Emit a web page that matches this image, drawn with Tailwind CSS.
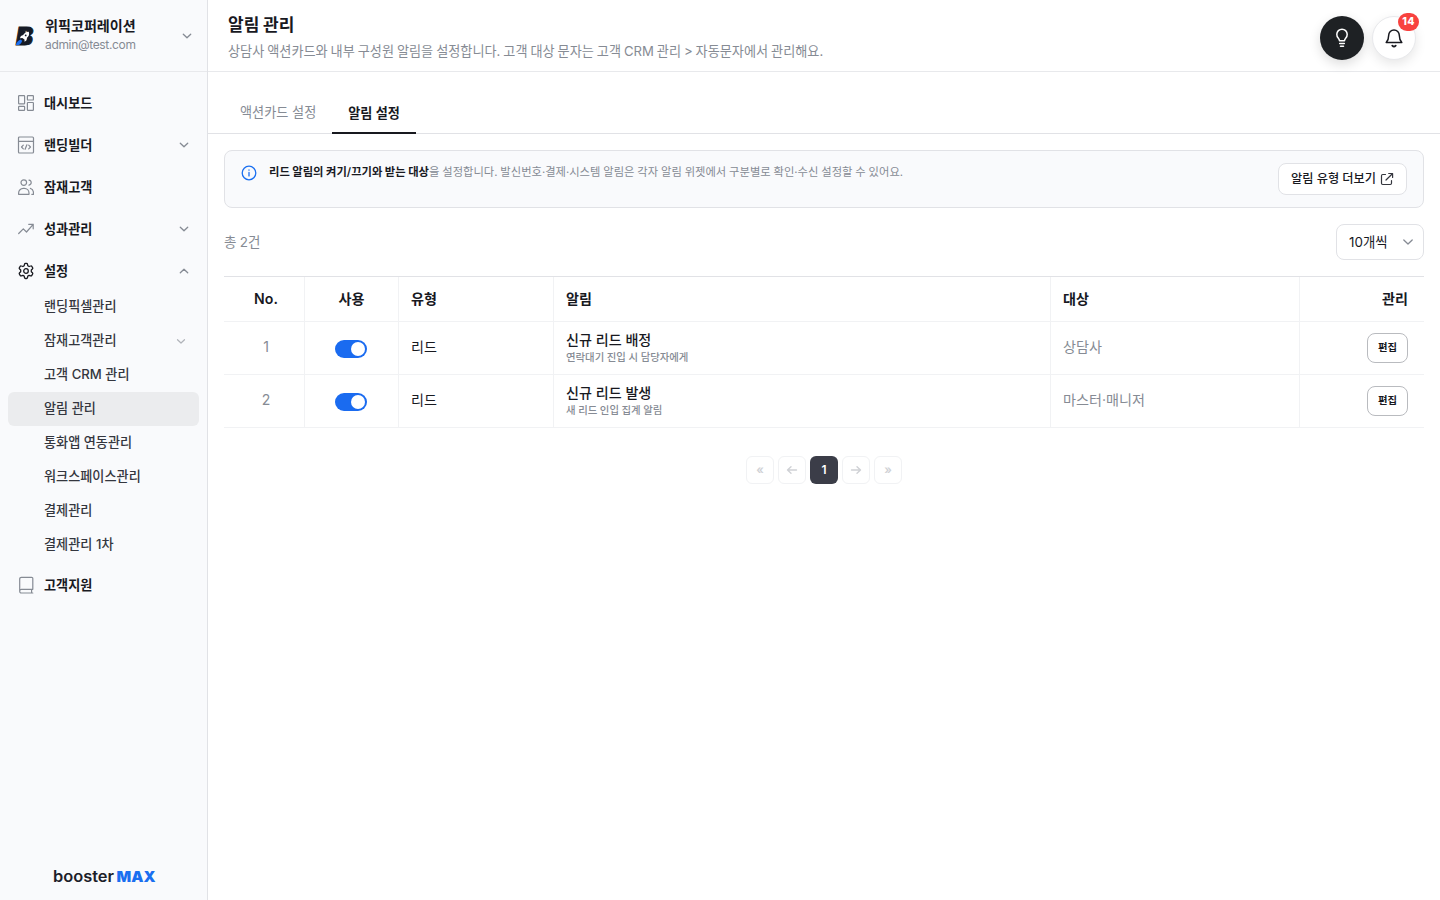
<!DOCTYPE html>
<html lang="ko">
<head>
  <meta charset="UTF-8">
  <title>알림 관리 - boosterMAX</title>
  <script src="https://cdn.jsdelivr.net/npm/@tailwindcss/browser@4"></script>
</head>
<body class="flex h-screen overflow-hidden bg-white text-[#18191f] text-[13.15px] leading-5 [word-spacing:-0.5px] font-[Inter,'Noto_Sans_CJK_KR',sans-serif]">

<aside class="flex flex-col w-52 h-full bg-[#f9fafc] border-r border-[#e1e2e6]">
  <div class="flex items-center h-18 pl-[15px] pr-3.5 border-b border-[#e8e9ec]">
    <svg class="w-5 h-5 shrink-0 overflow-visible" viewBox="0 0 20 20">
      <text x="1" y="18.500" font-family="Inter" font-size="24" font-weight="900" font-style="italic" fill="#161b26" stroke="#161b26" stroke-width="1" textLength="17" lengthAdjust="spacingAndGlyphs">B</text>
      <path d="M4 18.800 6.500 5h4L12 18.800z" fill="#161b26"/>
      <path d="M13.800 5.800c-2.600.1-4.600 1.300-5.600 3.300L5.900 10l-1 2.200 2.400-.3 2.200 1.500.1 2.300 1.900-1.400.5-2.500c1.900-1.300 2.600-3.500 1.800-6z" fill="#fff"/>
      <circle cx="10.700" cy="9.400" r=".9" fill="#161b26"/>
      <path d="M.8 18.900c.6-2.400 2.200-4.300 4.700-5.400l1.700 1.300c-.6 2.300-2 3.800-3.700 4.100z" fill="#1a6ff0"/>
    </svg>
    <div class="ml-2.5 flex-1 pb-0.5">
      <div class="text-[14.1px] leading-5 font-semibold">위픽코퍼레이션</div>
      <div class="text-[12px] leading-[18px] tracking-[-0.33px] text-[#868b94]">admin@test.com</div>
    </div>
    <svg class="w-3 h-3" viewBox="0 0 12 12" fill="none" stroke="#868b94" stroke-width="1.3" stroke-linecap="round" stroke-linejoin="round"><path d="M2.300 4.200 6 7.800l3.700-3.600"/></svg>
  </div>

  <nav class="flex flex-col gap-1.5 pt-[13px] px-2 font-semibold">
    <a class="flex items-center h-9 px-2.5 gap-2.5">
      <svg class="w-4 h-4" viewBox="0 0 16 16" fill="none" stroke="#868b94" stroke-width="1.200"><rect x=".6" y=".6" width="6" height="8.200" rx=".6"/><rect x="9.400" y=".6" width="6" height="4.400" rx=".6"/><rect x=".6" y="11.400" width="6" height="4" rx=".6"/><rect x="9.400" y="7.500" width="6" height="7.900" rx=".6"/></svg>
      <span>대시보드</span>
    </a>
    <a class="flex items-center h-9 px-2.5 gap-2.5">
      <svg class="w-4 h-4 overflow-visible" viewBox="0 0 16 16" fill="none" stroke="#868b94" stroke-width="1.200" stroke-linecap="round" stroke-linejoin="round"><rect x=".5" y="0" width="15" height="16" rx="1"/><path d="M.5 4.300h15M5.300 8.200 3.500 10l1.800 1.800M10.700 8.200l1.800 1.800-1.800 1.800M8.900 7.800l-1.800 4.500"/></svg>
      <span class="flex-1">랜딩빌더</span>
      <svg class="w-3 h-3 -mr-px" viewBox="0 0 12 12" fill="none" stroke="#868b94" stroke-width="1.3" stroke-linecap="round" stroke-linejoin="round"><path d="M2.300 4.200 6 7.800l3.700-3.600"/></svg>
    </a>
    <a class="flex items-center h-9 px-2.5 gap-2.5">
      <svg class="w-4 h-4" viewBox="0 0 16 16" fill="none" stroke="#868b94" stroke-width="1.200" stroke-linecap="round" stroke-linejoin="round"><circle cx="5.800" cy="3.600" r="2.800"/><path d="M.6 15.300v-1.200c0-2.600 2.100-4.700 4.700-4.700h1c2.600 0 4.700 2.100 4.700 4.700v1.200zM11 1.100c1.300.2 2.200 1.200 2.200 2.500S12.300 5.900 11 6.100M12.300 9.300c1.900.5 3.200 2.500 3.200 4.800v1.200h-1.700"/></svg>
      <span>잠재고객</span>
    </a>
    <a class="flex items-center h-9 px-2.5 gap-2.5">
      <svg class="w-4 h-4" viewBox="0 0 16 16" fill="none" stroke="#868b94" stroke-width="1.200" stroke-linecap="round" stroke-linejoin="round"><path d="m.7 12.500 4.600-4.700 3.200 3.200 6.700-7.700M10.700 3.300h4.500v4.500"/></svg>
      <span class="flex-1">성과관리</span>
      <svg class="w-3 h-3 -mr-px" viewBox="0 0 12 12" fill="none" stroke="#868b94" stroke-width="1.3" stroke-linecap="round" stroke-linejoin="round"><path d="M2.300 4.200 6 7.800l3.700-3.600"/></svg>
    </a>
    <div>
      <a class="flex items-center h-9 px-2.5 gap-2.5">
        <svg class="w-4 h-4 overflow-visible" viewBox="0.4 0 15.2 16" fill="none" stroke="#18191f" stroke-width="1.300" stroke-linecap="round" stroke-linejoin="round"><path d="M6.500 1.300C6.600.7 7 .4 7.500.4h1c.5 0 .9.3 1 .9l.3 1.400 1.300.8 1.500-.5c.5-.2 1 0 1.200.4l.8 1.300c.3.5.2 1-.2 1.300l-1.100 1v1.800l1.100 1c.4.400.5.900.2 1.300l-.8 1.300c-.2.400-.7.600-1.200.4l-1.500-.5-1.300.8-.3 1.500c-.1.500-.5.900-1 .9h-1c-.5 0-.9-.4-1-.9l-.3-1.500-1.300-.8-1.500.5c-.5.200-1 0-1.200-.4l-.8-1.300c-.3-.4-.2-.9.200-1.300l1.100-1V7l-1.100-1c-.4-.3-.5-.8-.2-1.300l.8-1.300c.2-.4.7-.6 1.200-.4l1.500.5 1.300-.8z"/><circle cx="8" cy="8" r="2.300"/></svg>
        <span class="flex-1">설정</span>
        <svg class="w-3 h-3 -mr-px" viewBox="0 0 12 12" fill="none" stroke="#868b94" stroke-width="1.3" stroke-linecap="round" stroke-linejoin="round"><path d="M2.300 7.800 6 4.200l3.700 3.600"/></svg>
      </a>
      <div class="flex flex-col mt-px -mb-px font-medium text-[#34363e] [&>a]:pb-0.5">
        <a class="flex items-center h-[34px] pl-9">랜딩픽셀관리</a>
        <a class="flex items-center justify-between h-[34px] pl-9 pr-[13px]">잠재고객관리
          <svg class="w-2.5 h-2.5 mt-0.5" viewBox="0 0 10 10" fill="none" stroke="#b0b3b9" stroke-width="1.200" stroke-linecap="round" stroke-linejoin="round"><path d="M1.500 3.700 5 7l3.500-3.300"/></svg>
        </a>
        <a class="flex items-center h-[34px] pl-9 [word-spacing:0px]">고객 CRM 관리</a>
        <a class="flex items-center h-[34px] pl-9 bg-[#ebecee] rounded-md [word-spacing:0px]">알림 관리</a>
        <a class="flex items-center h-[34px] pl-9 [word-spacing:0px]">통화앱 연동관리</a>
        <a class="flex items-center h-[34px] pl-9">워크스페이스관리</a>
        <a class="flex items-center h-[34px] pl-9">결제관리</a>
        <a class="flex items-center h-[34px] pl-9 [word-spacing:0.2px]">결제관리 1차</a>
      </div>
    </div>
    <a class="flex items-center h-9 px-2.5 gap-2.5">
      <svg class="w-4 h-4 overflow-visible" viewBox="0 0 16 16" fill="none" stroke="#868b94" stroke-width="1.200" stroke-linecap="round" stroke-linejoin="round"><path d="M14.800 12.300V1.500c0-.7-.5-1.200-1.200-1.200H3.400c-1 0-1.700.7-1.700 1.700v12c0-1 .7-1.700 1.700-1.700zM14.800 16H3.400c-1 0-1.700-.8-1.700-1.800M13.600 12.400V16"/></svg>
      <span>고객지원</span>
    </a>
  </nav>

  <div class="mt-auto pb-3.5 flex justify-center">
    <svg class="w-26 h-5" viewBox="0 0 104 20" font-family="Inter">
      <text x="1" y="15.500" font-size="15.500" font-weight="600" fill="#1c2029" textLength="61" lengthAdjust="spacingAndGlyphs">booster</text>
      <text x="64.500" y="15.500" font-size="15" font-weight="900" fill="#1a6ff0" textLength="39" lengthAdjust="spacingAndGlyphs">MAX</text>
    </svg>
  </div>
</aside>

<main class="flex-1 flex flex-col">
  <header class="flex items-center justify-between h-18 pl-5 pr-6 border-b border-[#e8e9ec]">
    <div class="pt-0.5">
      <h1 class="text-[17px] leading-7 font-semibold">알림 관리</h1>
      <p class="leading-6 [word-spacing:-0.75px] text-[#868b94]">상담사 액션카드와 내부 구성원 알림을 설정합니다. 고객 대상 문자는 고객 CRM 관리 &gt; 자동문자에서 관리해요.</p>
    </div>
    <div class="flex gap-2 pt-1">
      <button class="flex items-center justify-center w-11 h-11 rounded-full bg-[#1e2124] shadow-[0_4px_12px_rgba(0,0,0,0.14)]">
        <svg class="w-5 h-5" viewBox="0 0 20 20" fill="none" stroke="#fff" stroke-width="1.500" stroke-linecap="round" stroke-linejoin="round"><path d="M7.500 12.700c0-1.300-.5-1.900-1.300-2.800a5.200 5.200 0 1 1 7.600 0c-.8.900-1.300 1.500-1.300 2.800zM7.700 15.500h4.600M8.500 18.200h3"/></svg>
      </button>
      <button class="relative flex items-center justify-center w-11 h-11 rounded-full bg-white border border-[#e8e9ec] shadow-[0_4px_12px_rgba(0,0,0,0.1)]">
        <svg class="w-5 h-5" viewBox="0 0 20 20" fill="none" stroke="#18191f" stroke-width="1.500" stroke-linecap="round" stroke-linejoin="round"><path d="M4.700 7.300a5.300 5.300 0 0 1 10.600 0c0 4 .9 5.500 2.500 7.200H2.200c1.600-1.700 2.500-3.200 2.500-7.200z"/><path d="M8.300 17.600c.9.900 2.500.9 3.400 0" stroke-width="1.800"/></svg>
        <span class="absolute -top-1 -right-1 flex items-center justify-center w-[21px] h-[18px] pt-px rounded-full bg-[#f8423f] text-white text-[10.5px] tracking-[0.3px] font-extrabold">14</span>
      </button>
    </div>
  </header>

  <div class="flex h-[62px] px-4 items-end border-b border-[#e1e2e6]">
    <a class="h-11 px-4 pt-[13px] [word-spacing:0px] text-[#868b94]">액션카드 설정</a>
    <a class="w-[84px] h-11 px-4 pt-[13px] -mb-px -ml-px translate-x-px [word-spacing:0px] font-semibold border-b-2 border-[#18191f]">알림 설정</a>
  </div>

  <div class="flex flex-col px-4 pt-4">
    <div class="flex justify-between h-[58px] pl-4 pr-4 pt-3 rounded-lg border border-[#e1e2e6] bg-[#f9fafc]">
      <div class="flex gap-3">
        <svg class="w-4 h-4 mt-0.5" viewBox="0 0 16 16" fill="none" stroke="#1a6ff0" stroke-width="1.300" stroke-linecap="round"><circle cx="8" cy="8" r="6.800"/><path d="M8 7.500v3.400M8 5v.2"/></svg>
        <p class="text-[11.3px] leading-[18px] [word-spacing:-0.3px] text-[#868b94]"><b class="font-semibold text-[#18191f]">리드 알림의 켜기/끄기와 받는 대상</b>을 설정합니다. 발신번호·결제·시스템 알림은 각자 알림 위젯에서 구분별로 확인·수신 설정할 수 있어요.</p>
      </div>
      <button class="flex items-center gap-1 h-8 px-3 rounded-lg border border-[#e1e2e6] bg-white text-[12.2px] font-medium">알림 유형 더보기
        <svg class="w-3.5 h-3.5" viewBox="0 0 14 14" fill="none" stroke="#34363e" stroke-width="1.200" stroke-linecap="round" stroke-linejoin="round"><path d="M8.700 1.500h3.900v3.900M12.400 1.700 6 8M5.500 2.500H2.700c-.7 0-1.200.5-1.200 1.200v7.600c0 .7.500 1.200 1.200 1.200h7.600c.7 0 1.200-.5 1.200-1.200V8.500"/></svg>
      </button>
    </div>

    <div class="flex items-center justify-between h-9 mt-4">
      <span class="text-[#868b94] text-[13.5px]">총 2건</span>
      <button class="flex items-center justify-between w-22 h-9 pl-3 pr-[9px] rounded-lg border border-[#e1e2e6] text-[13.4px]">10개씩
        <svg class="w-3 h-3" viewBox="0 0 12 12" fill="none" stroke="#868b94" stroke-width="1.300" stroke-linecap="round" stroke-linejoin="round"><path d="M1.800 4 6 8l4.200-4"/></svg>
      </button>
    </div>

    <table class="mt-4 w-full table-fixed border-separate border-spacing-0 border-t border-[#e1e2e6] text-[14.1px]">
      <colgroup>
        <col class="w-[81px]"><col class="w-[94px]"><col class="w-[155px]"><col class="w-[497px]"><col class="w-[249px]"><col class="w-[124px]">
      </colgroup>
      <thead>
        <tr class="h-[45px] text-left [&>th]:border-b [&>th]:border-[#f1f2f4] [&>th]:font-semibold [&>th]:px-3">
          <th class="border-r text-center pl-4!">No.</th>
          <th class="border-r text-center">사용</th>
          <th class="border-r">유형</th>
          <th class="border-r">알림</th>
          <th class="border-r">대상</th>
          <th class="text-right pr-4!">관리</th>
        </tr>
      </thead>
      <tbody>
        <tr class="h-[53px] [&>td]:border-b [&>td]:border-[#f1f2f4] [&>td]:px-3 [&>td]:pb-0.5">
          <td class="border-r text-center text-[#868b94] pl-4!">1</td>
          <td class="border-r pt-0.5 pb-0! pr-3.5!"><div class="flex justify-end items-center w-8 h-[18px] mx-auto p-0.5 rounded-full bg-[#1a6bf0]"><span class="w-3.5 h-3.5 rounded-full bg-white"></span></div></td>
          <td class="border-r">리드</td>
          <td class="border-r"><div class="leading-5 font-medium [word-spacing:0px]">신규 리드 배정</div><div class="text-[10.4px] leading-[15px] font-medium [word-spacing:-0.2px] text-[#868b94]">연락대기 진입 시 담당자에게</div></td>
          <td class="border-r text-[#868b94]">상담사</td>
          <td class="pr-4! pb-0!"><button class="block ml-auto w-[41px] h-[30px] pb-0.5 rounded-lg border border-[#b9bbbf] text-[10.35px] font-semibold">편집</button></td>
        </tr>
        <tr class="h-[53px] [&>td]:border-b [&>td]:border-[#f1f2f4] [&>td]:px-3 [&>td]:pb-0.5">
          <td class="border-r text-center text-[#868b94] pl-4!">2</td>
          <td class="border-r pt-0.5 pb-0! pr-3.5!"><div class="flex justify-end items-center w-8 h-[18px] mx-auto p-0.5 rounded-full bg-[#1a6bf0]"><span class="w-3.5 h-3.5 rounded-full bg-white"></span></div></td>
          <td class="border-r">리드</td>
          <td class="border-r"><div class="leading-5 font-medium [word-spacing:0px]">신규 리드 발생</div><div class="text-[10.4px] leading-[15px] font-medium [word-spacing:-0.2px] text-[#868b94]">새 리드 인입 집계 알림</div></td>
          <td class="border-r text-[#868b94]">마스터·매니저</td>
          <td class="pr-4! pb-0!"><button class="block ml-auto w-[41px] h-[30px] pb-0.5 rounded-lg border border-[#b9bbbf] text-[10.35px] font-semibold">편집</button></td>
        </tr>
      </tbody>
    </table>

    <div class="flex justify-center gap-1 mt-7 text-xs font-semibold text-[#cfd1d5]">
      <button class="w-7 h-7 rounded-md border border-[#f1f2f4]">«</button>
      <button class="flex items-center justify-center w-7 h-7 rounded-md border border-[#f1f2f4]">
        <svg class="w-3 h-3" viewBox="0 0 12 12" fill="none" stroke="currentColor" stroke-width="1.400" stroke-linecap="round" stroke-linejoin="round"><path d="M10.500 6h-9M5 2.700 1.500 6 5 9.300"/></svg>
      </button>
      <button class="w-7 h-7 rounded-md bg-[#3b3d48] text-white">1</button>
      <button class="flex items-center justify-center w-7 h-7 rounded-md border border-[#f1f2f4]">
        <svg class="w-3 h-3" viewBox="0 0 12 12" fill="none" stroke="currentColor" stroke-width="1.400" stroke-linecap="round" stroke-linejoin="round"><path d="M1.500 6h9M7 2.700 10.500 6 7 9.300"/></svg>
      </button>
      <button class="w-7 h-7 rounded-md border border-[#f1f2f4]">»</button>
    </div>
  </div>
</main>

</body>
</html>
